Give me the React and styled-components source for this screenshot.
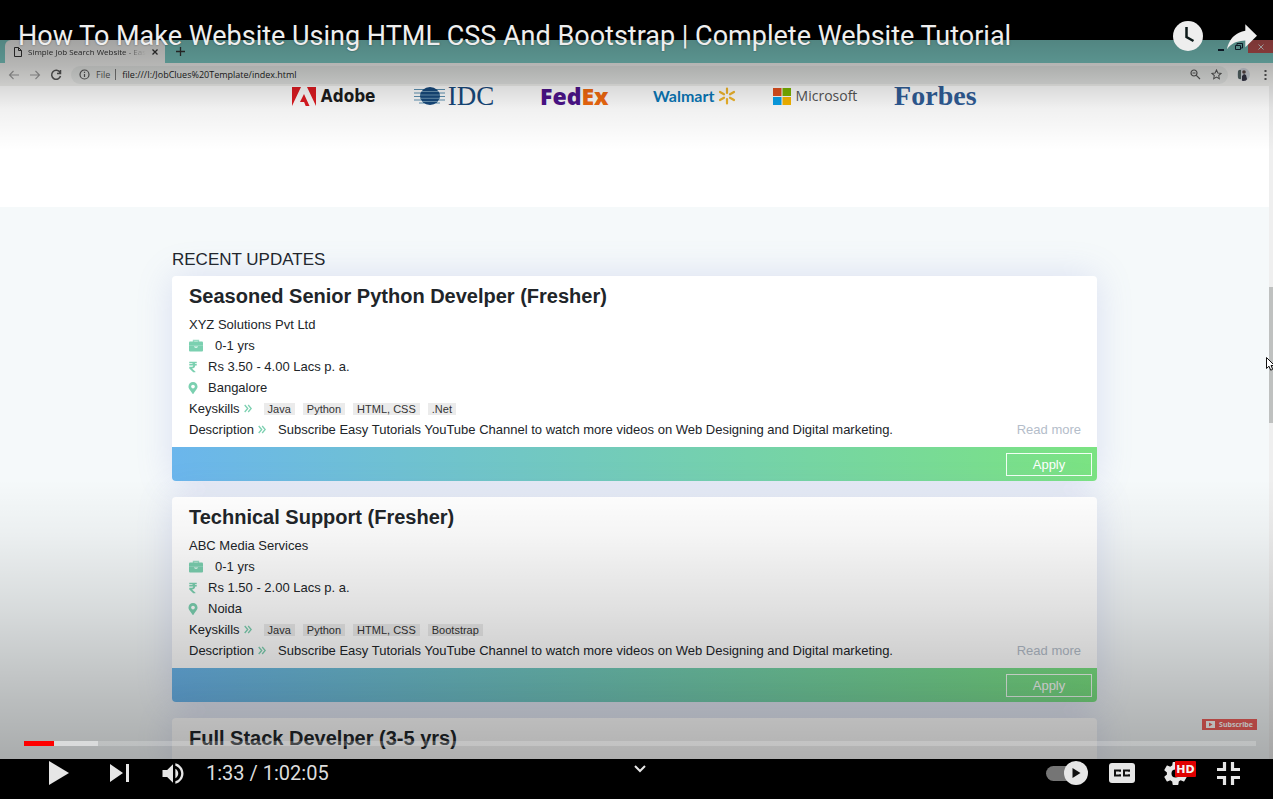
import React from "react";
import styled, { createGlobalStyle } from "styled-components";
import { FaRupeeSign, FaMapMarkerAlt } from "react-icons/fa";

const GlobalStyle = createGlobalStyle`
  * { box-sizing: border-box; }
  body { margin: 0; background: #000; font-family: "Liberation Sans", Arial, sans-serif; }
  button { font: inherit; color: inherit; background: none; border: 0; padding: 0; cursor: pointer; display: flex; align-items: center; justify-content: center; }
  a { text-decoration: none; color: inherit; }
  h1, h2, h3, p, ul { margin: 0; padding: 0; font-weight: inherit; }
  svg { display: block; flex: none; }
`;

/* ---------- player shell ---------- */
const Player = styled.main`
  position: relative;
  display: grid;
  grid-template-rows: 40px minmax(0, 1fr) 40px;
  height: 100vh;
  background: #000;
  overflow: hidden;
`;
const Frame = styled.section`
  grid-row: 2;
  position: relative;
  display: flex;
  flex-direction: column;
  min-height: 0;
  overflow: hidden;
  background: #fff;
`;
const Shade = styled.div`
  position: absolute;
  inset: 0;
  pointer-events: none;
  background:
    linear-gradient(to bottom, rgba(0,0,0,.32) 0, rgba(0,0,0,.24) 26px, rgba(0,0,0,.15) 46px, rgba(0,0,0,.06) 68px, transparent 110px),
    linear-gradient(to top, rgba(0,0,0,.31) 0, rgba(0,0,0,.24) 60px, rgba(0,0,0,.12) 150px, rgba(0,0,0,.04) 225px, transparent 280px);
`;
const TitleBar = styled.header`
  position: absolute;
  top: 0;
  left: 0;
  right: 0;
  display: flex;
  align-items: center;
  gap: 24px;
  padding: 20px 16px 0 18px;
  color: #eee;
`;
const VideoTitle = styled.h1`
  flex: 1;
  font: 400 27px/32px Roboto, sans-serif;
  text-shadow: 0 0 2px rgba(0,0,0,.5);
  white-space: nowrap;
`;

/* ---------- recorded browser ---------- */
const TabStrip = styled.div`
  flex: none;
  display: flex;
  align-items: flex-end;
  height: 23px;
  padding-left: 5px;
  background: #78c4be;
  font: 8px/12px "Open Sans", sans-serif;
  color: #333;
`;
const Tab = styled.div`
  display: flex;
  align-items: center;
  gap: 6px;
  width: 160px;
  height: 23px;
  padding: 0 7px 0 9px;
  border-radius: 6px 6px 0 0;
  background: #f0f0ee;
`;
const TabName = styled.span`
  flex: 1;
  overflow: hidden;
  white-space: nowrap;
  mask-image: linear-gradient(to right, #000 80%, transparent);
`;
const NewTab = styled.button`
  width: 30px;
  height: 23px;
`;
const WindowButtons = styled.div`
  display: flex;
  align-self: flex-start;
  margin-left: auto;
`;
const WindowButton = styled.button`
  width: ${(p) => (p.$close ? "25px" : "18px")};
  height: 13px;
  background: ${(p) => (p.$close ? "#b6504f" : "transparent")};
  color: ${(p) => (p.$close ? "#ddd" : "#123")};
`;
const Toolbar = styled.div`
  flex: none;
  display: flex;
  align-items: center;
  gap: 9px;
  height: 23px;
  padding: 0 6px 0 8px;
  background: #f0f0ee;
  color: #555;
`;
const Omnibox = styled.div`
  flex: 1;
  display: flex;
  align-items: center;
  gap: 6px;
  height: 18px;
  padding: 0 6px 0 8px;
  border-radius: 9px;
  background: #e3e5e3;
  font: 9px/14px "Open Sans", sans-serif;
`;
const Scheme = styled.span`
  padding-right: 5px;
  border-right: 1px solid #777;
  line-height: 11px;
`;
const Address = styled.input`
  flex: 1;
  min-width: 0;
  padding: 0;
  border: 0;
  outline: 0;
  background: none;
  font: inherit;
  color: #222;
`;
const Avatar = styled.button`
  width: 13px;
  height: 13px;
  margin-right: 5px;
  overflow: hidden;
  border-radius: 50%;
  background: #cfd4dc;
`;

/* ---------- recorded page ---------- */
const Viewport = styled.div`
  flex: 1;
  display: flex;
  min-height: 0;
`;
const Page = styled.div`
  flex: 1;
  display: flex;
  flex-direction: column;
  overflow: hidden;
  background: #f5f9fa;
`;
const Brands = styled.section`
  flex: none;
  display: flex;
  justify-content: center;
  align-items: flex-start;
  height: 121px;
  background: #fff;
`;
const BrandRow = styled.ul`
  display: grid;
  grid-template-columns: repeat(6, 1fr);
  width: 722px;
  max-width: 100%;
  list-style: none;
`;
const Brand = styled.li`
  display: flex;
  align-items: center;
  justify-content: center;
  gap: ${(p) => p.$gap || 4}px;
  height: 20px;
  font: ${(p) => p.$font};
  color: ${(p) => p.$color};
  white-space: nowrap;
`;
const Orange = styled.span`
  color: #f26a10;
`;
const Updates = styled.section`
  display: flex;
  flex-direction: column;
  gap: 16px;
  width: 100%;
  max-width: 957px;
  margin: 0 auto;
  padding: 43px 16px 0;
  color: #212529;
`;
const Heading = styled.h2`
  margin-bottom: -10px;
  font-size: 17px;
  line-height: 20px;
`;
const Card = styled.article`
  flex: none;
  border-radius: 4px;
  background: #fff;
  box-shadow: 0 0 36px rgba(110, 120, 210, .2);
`;
const CardBody = styled.div`
  padding: 8px 16px 7px 17px;
  font-size: 13px;
  line-height: 21px;
`;
const JobTitle = styled.h3`
  margin-bottom: 6px;
  font-size: 20px;
  font-weight: 700;
  line-height: 24px;
`;
const Line = styled.div`
  display: flex;
  align-items: center;
  gap: 12px;
  min-height: 21px;
`;
const Label = styled.span`
  display: flex;
  align-items: center;
  gap: 4px;
`;
const Green = styled.span`
  display: flex;
  justify-content: center;
  color: #7bd0b0;
`;
const SmallIcon = styled(Green)`
  width: 7px;
`;
const Tags = styled.ul`
  display: flex;
  gap: 8px;
  list-style: none;
`;
const Tag = styled.li`
  padding: 0 4px;
  background: #ebebeb;
  font-size: 11px;
  line-height: 12px;
  color: #333;
`;
const ReadMore = styled.a`
  margin-left: auto;
  color: #b4bdca;
`;
const ApplyBar = styled.div`
  display: flex;
  justify-content: flex-end;
  padding: 6px 5px 5px;
  border-radius: 0 0 4px 4px;
  background: linear-gradient(to right, #6bb6ec, #7be382);
`;
const Apply = styled.button`
  width: 86px;
  height: 23px;
  border: 1px solid #f2fff4;
  color: #fff;
  font-size: 13px;
`;
const Scrollbar = styled.div`
  flex: none;
  width: 4px;
  padding-top: 201px;
  background: #efefef;
`;
const Thumb = styled.div`
  height: 136px;
  background: #bfc1c0;
`;
const Cursor = styled.svg`
  position: absolute;
  top: 317px;
  right: -4px;
`;
const Subscribe = styled.button`
  position: absolute;
  right: 16px;
  bottom: 29px;
  gap: 4px;
  width: 55px;
  height: 11px;
  background: #f0605c;
  color: #fff;
  font: 700 7px/11px "Open Sans", sans-serif;
`;

/* ---------- player controls ---------- */
const Progress = styled.input`
  position: absolute;
  left: 24px;
  right: 17px;
  bottom: 53px;
  width: calc(100% - 41px);
  height: 5px;
  margin: 0;
  appearance: none;
  background: linear-gradient(to right, #f00 30px, rgba(255,255,255,.55) 30px, rgba(255,255,255,.55) 74px, rgba(255,255,255,.2) 74px);
  &::-webkit-slider-thumb { appearance: none; width: 0; height: 0; }
`;
const Controls = styled.footer`
  grid-row: 3;
  display: grid;
  grid-template-columns: 1fr auto 1fr;
  align-items: center;
  height: 28px;
  padding: 0 33px 0 40px;
  color: #e6e6e6;
`;
const Group = styled.div`
  display: flex;
  align-items: center;
  justify-self: ${(p) => (p.$end ? "end" : "start")};
  gap: ${(p) => p.$gap || 0}px;
`;
const Transport = styled(Group)`
  gap: 41px;
  margin: 0 33px 0 9px;
`;
const Time = styled.span`
  margin-left: 22px;
  font: 400 20px/24px Roboto, sans-serif;
  color: #ddd;
`;
const More = styled.button`
  align-self: start;
  height: 20px;
`;
const Autoplay = styled.button`
  position: relative;
  width: 42px;
  height: 24px;
  justify-content: flex-end;
  &::before {
    content: "";
    position: absolute;
    left: 0;
    width: 34px;
    height: 15px;
    border-radius: 8px;
    background: #757575;
  }
  svg { position: relative; }
`;
const Captions = styled.button`
  margin-right: 8px;
`;
const Settings = styled.button`
  position: relative;
  width: 32px;
  justify-content: flex-start;
`;
const Hd = styled.span`
  position: absolute;
  top: -1px;
  right: 0;
  width: 21px;
  height: 16px;
  border-radius: 1px;
  background: #e00000;
  color: #f4f4f4;
  font: 700 11px/17px "DejaVu Sans", sans-serif;
`;

const Stroke = ({ w, h, box, d, sw = 1.3, ...rest }) => (
  <svg width={w} height={h} viewBox={box} fill="none" stroke="currentColor" strokeWidth={sw} aria-hidden="true" {...rest}>
    <path d={d} />
  </svg>
);
const Solid = ({ w, h, box, d, ...rest }) => (
  <svg width={w} height={h} viewBox={box} fill="currentColor" aria-hidden="true" {...rest}>
    <path d={d} />
  </svg>
);

const Briefcase = () => (
  <svg width="14" height="13" viewBox="0 0 14 13" aria-hidden="true">
    <path d="M4.500 3V1.500h5V3" fill="none" stroke="#9adcc4" strokeWidth="1.400" />
    <rect y="2.500" width="14" height="10" rx="1" fill="#7bd0b0" />
    <path d="M0 6.500h14" stroke="#98dbc3" strokeWidth=".8" />
    <path d="M5 7.500h4v.6q-2 1.600-4 0z" fill="#eefaf5" />
  </svg>
);
const Angles = () => (
  <Green><Stroke w={8} h={9} box="0 0 8 9" d="M.7 1l3 3.500-3 3.500M4.200 1l3 3.500-3 3.500" /></Green>
);

const jobs = [
  { title: "Seasoned Senior Python Develper (Fresher)", company: "XYZ Solutions Pvt Ltd", pay: "Rs 3.50 - 4.00 Lacs p. a.", city: "Bangalore", tags: ["Java", "Python", "HTML, CSS", ".Net"] },
  { title: "Technical Support (Fresher)", company: "ABC Media Services", pay: "Rs 1.50 - 2.00 Lacs p. a.", city: "Noida", tags: ["Java", "Python", "HTML, CSS", "Bootstrap"] },
  { title: "Full Stack Develper (3-5 yrs)" },
];

const JobCard = ({ job }) => (
  <Card>
    <CardBody>
      <JobTitle>{job.title}</JobTitle>
      {job.company && (
        <>
          <p>{job.company}</p>
          <Line><Briefcase />0-1 yrs</Line>
          <Line><SmallIcon><FaRupeeSign size={12} /></SmallIcon>{job.pay}</Line>
          <Line><SmallIcon><FaMapMarkerAlt size={12} /></SmallIcon>{job.city}</Line>
          <Line>
            <Label>Keyskills <Angles /></Label>
            <Tags>{job.tags.map((t) => <Tag key={t}>{t}</Tag>)}</Tags>
          </Line>
          <Line>
            <Label>Description <Angles /></Label>
            <span>Subscribe Easy Tutorials YouTube Channel to watch more videos on Web Designing and Digital marketing.</span>
            <ReadMore href="#more">Read more</ReadMore>
          </Line>
        </>
      )}
    </CardBody>
    {job.company && <ApplyBar><Apply>Apply</Apply></ApplyBar>}
  </Card>
);

const AdobeMark = () => (
  <svg width="24" height="19" viewBox="0 0 24 19" fill="#e01b22" aria-hidden="true">
    <path d="M0 0h9L0 19zM15 0h9v19zM12 7l5.500 12h-3.800l-1.600-4H8z" />
  </svg>
);
const IdcGlobe = () => (
  <svg width="31" height="18" viewBox="0 0 31 18" aria-hidden="true">
    <path d="M0 2.500h31M0 6h31M0 9.500h31M0 13h31M5 16h21" stroke="#5f93b3" strokeWidth="1" />
    <ellipse cx="16" cy="9" rx="10" ry="9" fill="#17497c" />
    <path d="M8 4.500h16M6 8h20M6 11.300h20M8 14.500h16" stroke="#7fa6bf" strokeWidth=".8" />
  </svg>
);
const WalmartSpark = () => (
  <svg width="18" height="18" viewBox="0 0 18 18" stroke="#f2b72c" strokeWidth="2.200" strokeLinecap="round" aria-hidden="true">
    <path d="M9 1.500v4.500M9 12v4.500M2 5l4 2.300M12 10.700l4 2.300M2 13l4-2.300M12 7.300l4-2.300" />
  </svg>
);
const MicrosoftMark = () => (
  <svg width="18" height="17" viewBox="0 0 18 17" aria-hidden="true">
    <path fill="#e4511f" d="M0 0h8.500v8H0z" /><path fill="#7cb400" d="M9.500 0H18v8H9.500z" />
    <path fill="#0aa2ea" d="M0 9h8.500v8H0z" /><path fill="#f9b800" d="M9.500 9H18v8H9.500z" />
  </svg>
);

export default function App() {
  return (
    <Player>
      <GlobalStyle />
      <Frame>
        <TabStrip>
          <Tab>
            <Stroke w={8} h={10} box="0 0 8 10" sw={1} d="M.5.5h4l3 3v6h-7zM4.500.5v3h3" />
            <TabName>Simple Job Search Website - Easy</TabName>
            <button aria-label="Close tab"><Stroke w={6} h={6} box="0 0 6 6" d="M.5.5l5 5M5.500.5l-5 5" /></button>
          </Tab>
          <NewTab aria-label="New tab"><Stroke w={9} h={9} box="0 0 9 9" d="M4.500 0v9M0 4.500h9" /></NewTab>
          <WindowButtons>
            <WindowButton aria-label="Minimise"><Stroke w={6} h={8} box="0 0 6 8" sw={2} d="M0 7h6" /></WindowButton>
            <WindowButton aria-label="Restore"><Stroke w={8} h={7} box="0 0 8 7" sw={1} d="M.5 2.500h5v4h-5zM2 2V.5h5.500V5H6" /></WindowButton>
            <WindowButton $close aria-label="Close"><Stroke w={6} h={6} box="0 0 6 6" sw={1} d="M.5.5l5 5M5.500.5l-5 5" /></WindowButton>
          </WindowButtons>
        </TabStrip>
        <Toolbar>
          <button aria-label="Back"><Stroke w={12} h={10} box="0 0 12 10" sw={1.1} stroke="#999" d="M11 5H2M5.500 1L1.500 5l4 4" /></button>
          <button aria-label="Forward"><Stroke w={12} h={10} box="0 0 12 10" sw={1.1} stroke="#999" d="M1 5h9M6.500 1l4 4-4 4" /></button>
          <button aria-label="Reload"><Stroke w={12} h={12} box="0 0 12 12" sw={1.5} d="M10 3.500A4.500 4.500 0 1 0 10.500 7M10.500 1v3.500H7" /></button>
          <Omnibox>
            <Stroke w={11} h={11} box="0 0 11 11" sw={1.2} d="M5.500 1a4.500 4.500 0 1 0 0 9a4.500 4.500 0 1 0 0-9M5.500 5v3M5.500 2.800v1.200" />
            <Scheme>File</Scheme>
            <Address aria-label="Address" defaultValue="file:///I:/JobClues%20Template/index.html" />
            <Group $gap={10}>
              <button aria-label="Zoom"><Stroke w={11} h={11} box="0 0 11 11" sw={1.2} d="M4 1a3 3 0 1 0 0 6a3 3 0 1 0 0-6M6.300 6.300L10 10M2.500 4h3" /></button>
              <button aria-label="Bookmark"><Stroke w={11} h={11} box="0 0 12 12" sw={1.1} d="M6 1l1.500 3.300 3.500.4-2.600 2.400.7 3.500L6 8.900l-3.100 1.700.7-3.500L1 4.700l3.500-.4z" /></button>
            </Group>
          </Omnibox>
          <Avatar aria-label="Profile">
            <svg width="13" height="13" viewBox="0 0 13 13" aria-hidden="true"><path d="M1 2h3v9H1z" fill="#566" /><circle cx="7" cy="4" r="1.800" fill="#544" /><path d="M5 13V8l2-2 2 1 1 4-1 2z" fill="#334" /></svg>
          </Avatar>
          <button aria-label="Menu"><Solid w={3} h={10} box="0 0 3 10" d="M.5 0h2v2h-2zM.5 4h2v2h-2zM.5 8h2v2h-2z" /></button>
        </Toolbar>
        <Viewport>
          <Page>
            <Brands>
              <BrandRow>
                <Brand $font='700 17px/20px "DejaVu Sans Condensed", "DejaVu Sans", sans-serif' $color="#1c1c1c" $gap={5}><AdobeMark />Adobe</Brand>
                <Brand $font='400 27px/20px "Liberation Serif", serif' $color="#17497c" $gap={3}><IdcGlobe />IDC</Brand>
                <Brand $font='800 23px/20px "Open Sans", sans-serif' $color="#4d148c"><span>Fed<Orange>Ex</Orange></span></Brand>
                <Brand $font='700 16px/20px Lato, sans-serif' $color="#0a78b8"><span>Walmart</span><WalmartSpark /></Brand>
                <Brand $font='400 14px/20px "Open Sans", sans-serif' $color="#555" $gap={5}><MicrosoftMark />Microsoft</Brand>
                <Brand $font='700 28px/20px "Liberation Serif", serif' $color="#305d97">Forbes</Brand>
              </BrandRow>
            </Brands>
            <Updates>
              <Heading>RECENT UPDATES</Heading>
              {jobs.map((j) => <JobCard key={j.title} job={j} />)}
            </Updates>
          </Page>
          <Scrollbar><Thumb /></Scrollbar>
        </Viewport>
        <Subscribe>
          <Solid w={9} h={7} box="0 0 9 7" fillRule="evenodd" d="M0 0h9v7H0zM3 1.500v4l3.500-2z" />Subscribe
        </Subscribe>
        <Shade />
        <Cursor width="11" height="14" viewBox="0 0 11 14" fill="#fff" stroke="#111" aria-hidden="true">
          <path d="M.5.5v11l2.500-2.300 1.700 4 2-.9-1.700-3.800h3.500z" />
        </Cursor>
      </Frame>
      <Controls>
        <Group>
          <Transport>
            <button aria-label="Play"><Solid w={20} h={24} box="0 0 20 24" d="M0 0l20 12L0 24z" /></button>
            <button aria-label="Next"><Solid w={19} h={18} box="0 0 19 18" d="M0 0l13 9L0 18zM16 0h3v18h-3z" /></button>
          </Transport>
          <button aria-label="Mute"><Solid w={22} h={21} box="8 9 18 18" d="M8 21h4l5 5V10l-5 5H8zM19 14v8c1.480-.68 2.500-2.230 2.500-4s-1.020-3.260-2.500-4zM19 11.290C21.890 12.150 24 14.830 24 18s-2.110 5.850-5 6.710v2.060c4.010-.91 7-4.490 7-8.770s-2.990-7.860-7-8.770z" /></button>
          <Time>1:33 / 1:02:05</Time>
        </Group>
        <More aria-label="More"><Stroke w={12} h={8} box="0 0 12 8" sw={2} d="M1 1l5 5 5-5" /></More>
        <Group $end $gap={21}>
          <Autoplay aria-label="Autoplay">
            <svg width="24" height="24" viewBox="0 0 24 24" aria-hidden="true"><circle cx="12" cy="12" r="12" fill="#e6e6e6" /><path d="M8.500 7l8 5-8 5z" fill="#111" /></svg>
          </Autoplay>
          <Captions aria-label="Subtitles">
            <svg width="26" height="20" viewBox="0 0 26 20" aria-hidden="true"><rect width="26" height="20" rx="3" fill="#e6e6e6" /><path d="M11 8.800V7.500H6v5h5v-1.300M20 8.800V7.500h-5v5h5v-1.300" fill="none" stroke="#111" strokeWidth="2" /></svg>
          </Captions>
          <Settings aria-label="Settings">
            <Solid w={23} h={23} box="10 10 16 16" d="m23.940 18.780c.03-.25.05-.51.05-.78s-.02-.52-.05-.78l1.680-1.320c.15-.12.19-.33.09-.51l-1.600-2.760c-.09-.17-.31-.24-.48-.17l-1.990.8c-.41-.32-.86-.58-1.350-.78l-.3-2.120c-.02-.19-.19-.33-.39-.33h-3.200c-.2 0-.36.14-.39.33l-.3 2.120c-.48.2-.93.47-1.350.78l-1.990-.8c-.18-.07-.39 0-.48.17l-1.600 2.760c-.1.17-.05.39.09.51l1.680 1.320c-.03.25-.05.52-.05.78s.02.52.05.78l-1.680 1.320c-.15.12-.19.33-.09.51l1.600 2.760c.09.17.31.24.48.17l1.990-.8c.41.32.86.58 1.350.78l.3 2.120c.02.19.19.33.39.33h3.200c.2 0 .36-.14.39-.33l.3-2.120c.48-.2.93-.47 1.350-.78l1.990.8c.18.07.39 0 .48-.17l1.600-2.760c.09-.17.05-.39-.09-.51zM18 20.790a2.800 2.800 0 1 1 0-5.600a2.800 2.800 0 1 1 0 5.600z" fillRule="evenodd" />
            <Hd>HD</Hd>
          </Settings>
          <button aria-label="Exit full screen"><Stroke w={23} h={23} box="0 0 23 23" sw={3.2} d="M0 7.500h7.500V0M15.500 0v7.500H23M23 15.500h-7.500V23M7.500 23v-7.500H0" /></button>
        </Group>
      </Controls>
      <Progress type="range" aria-label="Seek" min="0" max="3725" defaultValue="93" />
      <TitleBar>
        <VideoTitle>How To Make Website Using HTML CSS And Bootstrap | Complete Website Tutorial</VideoTitle>
        <button aria-label="Watch later">
          <svg width="30" height="30" viewBox="0 0 30 30" aria-hidden="true"><circle cx="15" cy="15" r="15" fill="#eee" /><path d="M13.500 6v10l7 4" fill="none" stroke="#0d1a1a" strokeWidth="2.500" /></svg>
        </button>
        <button aria-label="Share"><Solid w={30} h={25} box="8 9.700 20 16.500" d="m20.200 14.190V9.740l7.790 7.790-7.790 7.620v-4.560C16.270 20.690 12.100 21.810 9.340 24.760 8.800 25.130 7.600 27.290 8.120 25.650 9.080 21.320 11.800 17.180 15.980 15.380c1.330-.6 2.760-.98 4.210-1.190z" /></button>
      </TitleBar>
    </Player>
  );
}
